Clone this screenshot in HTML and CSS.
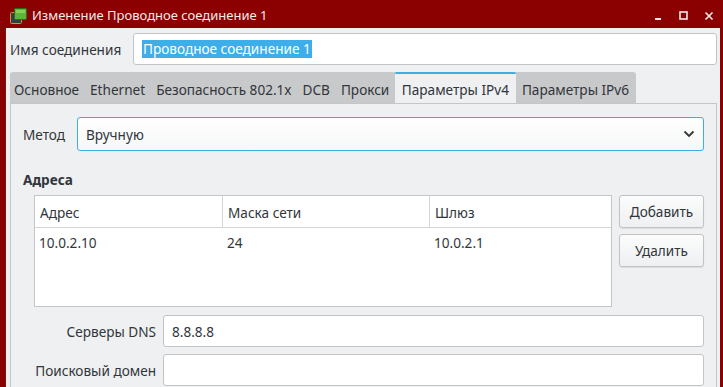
FILE: index.html
```html
<!DOCTYPE html>
<html lang="ru">
<head>
<meta charset="utf-8">
<title>Изменение Проводное соединение 1</title>
<link rel="stylesheet" href="styles.css">
</head>
<body>
<div class="window">
  <div class="titlebar">
    <svg class="app-icon" width="17" height="16" viewBox="0 0 17 16">
      <rect x="0.5" y="4.5" width="11" height="11" rx="1" fill="#2e3f4c" stroke="#e08a2c"/>
      <rect x="4.5" y="0.5" width="12" height="11" rx="1" fill="#5fb43a" stroke="#2f6b1f"/>
      <rect x="6" y="2" width="9" height="3" fill="#86d05a"/>
    </svg>
    <span class="title">Изменение Проводное соединение 1</span>
    <div class="controls">
      <svg width="10" height="10" viewBox="0 0 10 10"><rect x="1" y="7" width="6" height="2" fill="#f4e8e8"/></svg>
      <svg width="10" height="10" viewBox="0 0 10 10"><rect x="1" y="1" width="7" height="7" fill="none" stroke="#f4e8e8" stroke-width="1.6"/></svg>
      <svg width="10" height="10" viewBox="0 0 10 10"><path d="M1.5 1.5 L8.5 8.5 M8.5 1.5 L1.5 8.5" stroke="#f4e8e8" stroke-width="1.7"/></svg>
    </div>
  </div>
  <div class="body">
    <div class="name-row">
      <span class="name-label">Имя соединения</span>
      <div class="text-input name-input"><span class="selection">Проводное соединение 1</span></div>
    </div>
    <div class="tabbar">
      <span class="tab">Основное</span>
      <span class="tab">Ethernet</span>
      <span class="tab">Безопасность 802.1x</span>
      <span class="tab">DCB</span>
      <span class="tab">Прокси</span>
      <span class="tab active">Параметры IPv4</span>
      <span class="tab">Параметры IPv6</span>
    </div>
    <div class="panel">
      <div class="method-row">
        <span class="method-label">Метод</span>
        <div class="combo">
          <span>Вручную</span>
          <svg width="12" height="8" viewBox="0 0 12 8"><path d="M1.5 1.5 L6 6 L10.5 1.5" fill="none" stroke="#31363b" stroke-width="1.8"/></svg>
        </div>
      </div>
      <div class="section-title">Адреса</div>
      <div class="addr">
        <div class="table">
          <div class="thead">
            <div class="cell c1">Адрес</div>
            <div class="cell c2">Маска сети</div>
            <div class="cell c3">Шлюз</div>
          </div>
          <div class="trow">
            <div class="cell c1">10.0.2.10</div>
            <div class="cell c2">24</div>
            <div class="cell c3">10.0.2.1</div>
          </div>
        </div>
        <div class="btns">
          <button class="btn">Добавить</button>
          <button class="btn">Удалить</button>
        </div>
      </div>
      <div class="form">
        <span class="form-label">Серверы DNS</span>
        <div class="text-input field">8.8.8.8</div>
        <span class="form-label">Поисковый домен</span>
        <div class="text-input field"></div>
      </div>
    </div>
  </div>
</div>
</body>
</html>
```

FILE: styles.css
```css
* { box-sizing: border-box; }
html, body { margin: 0; padding: 0; }
body {
  width: 723px;
  height: 387px;
  overflow: hidden;
  font-family: "Noto Sans", "DejaVu Sans", sans-serif;
  font-size: 13.6px;
  color: #31363b;
}
.window {
  width: 723px;
  height: 387px;
  background: #8b0000;
  display: flex;
  flex-direction: column;
}
.titlebar {
  height: 28px;
  flex: none;
  display: flex;
  align-items: center;
  padding: 1px 0 0 10px;
  color: #f5e9e9;
}
.app-icon { flex: none; margin-right: 5px; margin-top: 2px; }
.title { font-size: 13px; }
.controls {
  margin-left: auto;
  display: flex;
  gap: 15px;
  padding-right: 9px;
  margin-top: 2px;
}
.body {
  flex: 1;
  margin: 0 3px 0 5px;
  background: #eff0f1;
  border-left: 1px solid #6b1a1a;
  padding: 5px 3px 0 4px;
  overflow: hidden;
}
.name-row {
  display: flex;
  align-items: center;
  height: 32px;
}
.name-label { width: 123px; flex: none; }
.text-input {
  background: #fff;
  border: 1px solid #c2c4c6;
  border-radius: 3px;
}
.name-input {
  flex: 1;
  height: 32px;
  display: flex;
  align-items: center;
  padding-left: 8px;
}
.selection {
  background: #3daee9;
  color: #fff;
  line-height: 18px;
  padding: 0 1px;
}
.tabbar {
  margin-top: 7px;
  display: inline-flex;
  background: #c8c9ca;
  height: 31px;
  border-top-left-radius: 3px;
  border-top-right-radius: 3px;
  vertical-align: top;
}
.tab {
  padding: 3px 5.5px 0 5.5px;
  display: flex;
  align-items: center;
  white-space: nowrap;
  color: #31363b;
}
.tab:first-child { padding-left: 4px; }
.tab.active {
  background: #eff0f1;
  border-top: 2px solid #3daee9;
  padding: 1px 7px 0 7px;
  border-top-left-radius: 2px;
  border-top-right-radius: 2px;
}
.tab.active + .tab { padding: 3px 7px 0 6px; }
.panel {
  border: 1px solid #c4c6c8;
  border-bottom: none;
  background: #eff0f1;
  padding: 13px 12px 0 12px;
  height: 300px;
}
.method-row {
  display: flex;
  align-items: center;
  height: 34px;
}
.method-label { width: 54px; flex: none; }
.combo {
  flex: 1;
  height: 34px;
  border: 1px solid #3daee9;
  border-radius: 3px;
  background: linear-gradient(#ffffff, #f6f7f7);
  display: flex;
  align-items: center;
  justify-content: space-between;
  padding: 0 8px 0 8px;
}
.section-title {
  font-weight: bold;
  margin-top: 20px;
  line-height: 18px;
}
.addr {
  display: flex;
  gap: 7px;
  margin-top: 6px;
  margin-left: 11px;
}
.table {
  width: 578px;
  height: 112px;
  background: #fff;
  border: 1px solid #c4c6c8;
  flex: none;
}
.thead, .trow { display: flex; }
.thead { height: 32px; border-bottom: 1px solid #d4d5d6; }
.thead .cell { display: flex; align-items: center; padding-left: 5px; padding-top: 1px; }
.thead .c1, .thead .c2 { border-right: 1px solid #d4d5d6; }
.c1 { width: 188px; }
.c2 { width: 207px; }
.c3 { flex: 1; }
.trow .cell { height: 28px; display: flex; align-items: center; padding-left: 4px; padding-top: 1px; }
.btns {
  display: flex;
  flex-direction: column;
  gap: 6px;
}
.btn {
  width: 85px;
  height: 33px;
  font-family: inherit;
  font-size: 13.6px;
  color: #31363b;
  background: linear-gradient(#fcfcfc, #eef0f1);
  border: 1px solid #c0c2c4;
  border-radius: 3px;
  box-shadow: 0 1px 1px rgba(0,0,0,0.08);
  padding: 0;
}
.form {
  display: grid;
  grid-template-columns: 122px 1fr;
  column-gap: 7px;
  row-gap: 7px;
  margin-top: 8px;
  margin-left: 11px;
  align-items: center;
}
.form-label { text-align: right; white-space: nowrap; }
.field {
  height: 32px;
  display: flex;
  align-items: center;
  padding-left: 8px;
}
```
